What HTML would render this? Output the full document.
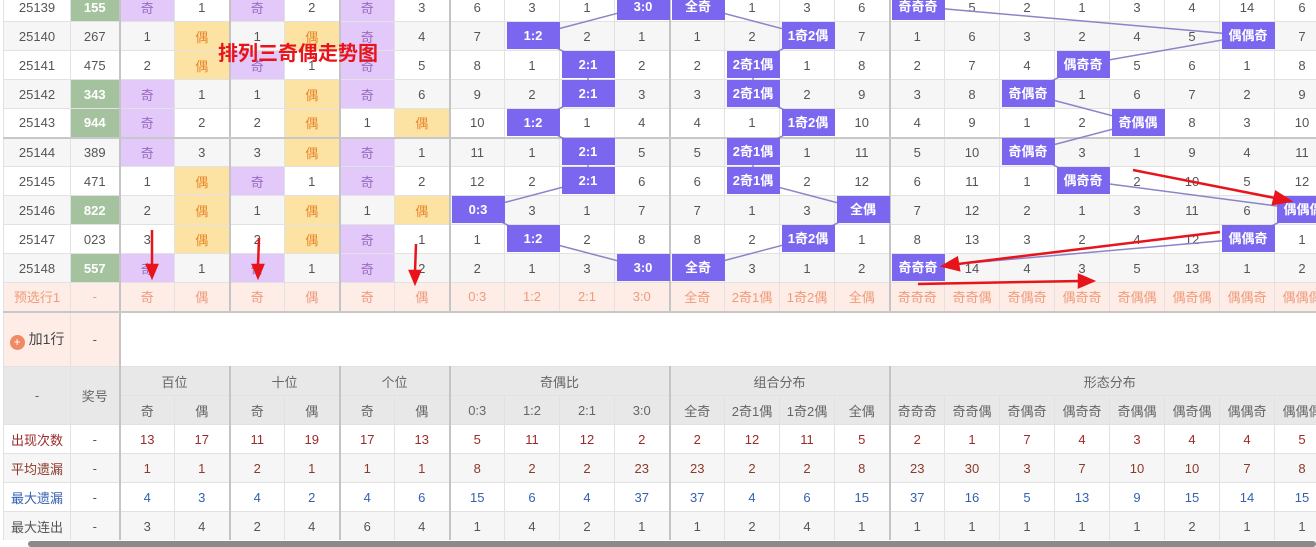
<!DOCTYPE html>
<html><head><meta charset="utf-8"><style>
*{margin:0;padding:0;box-sizing:border-box}
body{width:1316px;height:547px;overflow:hidden;background:#fff;position:relative;font-family:"Liberation Sans","Noto Sans CJK SC",sans-serif;font-size:13px;color:#555}
table{border-collapse:collapse;table-layout:fixed;position:absolute;left:3px;width:1326px}
td{border:1px solid #e2e2e2;text-align:center;height:29px;padding:0;white-space:nowrap;overflow:hidden}
tr.a td{background:#fff}tr.z td{background:#f6f6f6}
td.g{background:#a5c29f!important;color:#fff;font-weight:bold}
td.p{background:#e2c9f9!important;color:#9a6ac0}
td.o{background:#fde3a3!important;color:#e8862a}
.L{border-left:2px solid #c4c4c4}
tr.sep td{border-bottom:2px solid #c8c8c8}
tr.pre td{background:#fdede6;color:#f09a7a}
tr.h td{background:#e8e8e8;color:#666}
.r1 td{color:#9b2a2a}.r2 td{color:#8a3a2a}.r3 td{color:#3461b0}.r4 td{color:#555}
td.k{color:#555!important}
</style></head><body>
<table style="top:-8px">
<colgroup><col style="width:67px"><col style="width:49px"><col span="22" style="width:55px"></colgroup>
<tr class="a"><td>25139</td><td class="g">155</td><td class="p L">奇</td><td>1</td><td class="p L">奇</td><td>2</td><td class="p L">奇</td><td>3</td><td class="L">6</td><td>3</td><td>1</td><td></td><td class="L"></td><td>1</td><td>3</td><td>6</td><td class="L"></td><td>5</td><td>2</td><td>1</td><td>3</td><td>4</td><td>14</td><td>6</td></tr>
<tr class="z"><td>25140</td><td>267</td><td class="L">1</td><td class="o">偶</td><td class="L">1</td><td class="o">偶</td><td class="p L">奇</td><td>4</td><td class="L">7</td><td></td><td>2</td><td>1</td><td class="L">1</td><td>2</td><td></td><td>7</td><td class="L">1</td><td>6</td><td>3</td><td>2</td><td>4</td><td>5</td><td></td><td>7</td></tr>
<tr class="a"><td>25141</td><td>475</td><td class="L">2</td><td class="o">偶</td><td class="p L">奇</td><td>1</td><td class="p L">奇</td><td>5</td><td class="L">8</td><td>1</td><td></td><td>2</td><td class="L">2</td><td></td><td>1</td><td>8</td><td class="L">2</td><td>7</td><td>4</td><td></td><td>5</td><td>6</td><td>1</td><td>8</td></tr>
<tr class="z"><td>25142</td><td class="g">343</td><td class="p L">奇</td><td>1</td><td class="L">1</td><td class="o">偶</td><td class="p L">奇</td><td>6</td><td class="L">9</td><td>2</td><td></td><td>3</td><td class="L">3</td><td></td><td>2</td><td>9</td><td class="L">3</td><td>8</td><td></td><td>1</td><td>6</td><td>7</td><td>2</td><td>9</td></tr>
<tr class="a sep"><td>25143</td><td class="g">944</td><td class="p L">奇</td><td>2</td><td class="L">2</td><td class="o">偶</td><td class="L">1</td><td class="o">偶</td><td class="L">10</td><td></td><td>1</td><td>4</td><td class="L">4</td><td>1</td><td></td><td>10</td><td class="L">4</td><td>9</td><td>1</td><td>2</td><td></td><td>8</td><td>3</td><td>10</td></tr>
<tr class="z"><td>25144</td><td>389</td><td class="p L">奇</td><td>3</td><td class="L">3</td><td class="o">偶</td><td class="p L">奇</td><td>1</td><td class="L">11</td><td>1</td><td></td><td>5</td><td class="L">5</td><td></td><td>1</td><td>11</td><td class="L">5</td><td>10</td><td></td><td>3</td><td>1</td><td>9</td><td>4</td><td>11</td></tr>
<tr class="a"><td>25145</td><td>471</td><td class="L">1</td><td class="o">偶</td><td class="p L">奇</td><td>1</td><td class="p L">奇</td><td>2</td><td class="L">12</td><td>2</td><td></td><td>6</td><td class="L">6</td><td></td><td>2</td><td>12</td><td class="L">6</td><td>11</td><td>1</td><td></td><td>2</td><td>10</td><td>5</td><td>12</td></tr>
<tr class="z"><td>25146</td><td class="g">822</td><td class="L">2</td><td class="o">偶</td><td class="L">1</td><td class="o">偶</td><td class="L">1</td><td class="o">偶</td><td class="L"></td><td>3</td><td>1</td><td>7</td><td class="L">7</td><td>1</td><td>3</td><td></td><td class="L">7</td><td>12</td><td>2</td><td>1</td><td>3</td><td>11</td><td>6</td><td></td></tr>
<tr class="a"><td>25147</td><td>023</td><td class="L">3</td><td class="o">偶</td><td class="L">2</td><td class="o">偶</td><td class="p L">奇</td><td>1</td><td class="L">1</td><td></td><td>2</td><td>8</td><td class="L">8</td><td>2</td><td></td><td>1</td><td class="L">8</td><td>13</td><td>3</td><td>2</td><td>4</td><td>12</td><td></td><td>1</td></tr>
<tr class="z"><td>25148</td><td class="g">557</td><td class="p L">奇</td><td>1</td><td class="p L">奇</td><td>1</td><td class="p L">奇</td><td>2</td><td class="L">2</td><td>1</td><td>3</td><td></td><td class="L"></td><td>3</td><td>1</td><td>2</td><td class="L"></td><td>14</td><td>4</td><td>3</td><td>5</td><td>13</td><td>1</td><td>2</td></tr>
<tr class="pre sep"><td>预选行1</td><td>-</td><td class="L">奇</td><td>偶</td><td class="L">奇</td><td>偶</td><td class="L">奇</td><td>偶</td><td class="L">0:3</td><td>1:2</td><td>2:1</td><td>3:0</td><td class="L">全奇</td><td>2奇1偶</td><td>1奇2偶</td><td>全偶</td><td class="L">奇奇奇</td><td>奇奇偶</td><td>奇偶奇</td><td>偶奇奇</td><td>奇偶偶</td><td>偶奇偶</td><td>偶偶奇</td><td>偶偶偶</td></tr>
<tr><td style="height:55px;background:#fdede6;color:#444;font-size:14px"><span style="display:inline-block;width:15px;height:15px;border-radius:50%;background:#f08a64;color:#fff;font-size:12px;line-height:15px;vertical-align:-2px;margin-right:4px">+</span>加1行</td><td style="background:#fdede6">-</td><td colspan="22" class="L" style="background:#fff"></td></tr>
<tr class="h"><td rowspan="2" style="height:58px">-</td><td rowspan="2">奖号</td><td colspan="2" class="L">百位</td><td colspan="2" class="L">十位</td><td colspan="2" class="L">个位</td><td colspan="4" class="L">奇偶比</td><td colspan="4" class="L">组合分布</td><td colspan="8" class="L">形态分布</td></tr>
<tr class="h"><td class="L">奇</td><td>偶</td><td class="L">奇</td><td>偶</td><td class="L">奇</td><td>偶</td><td class="L">0:3</td><td>1:2</td><td>2:1</td><td>3:0</td><td class="L">全奇</td><td>2奇1偶</td><td>1奇2偶</td><td>全偶</td><td class="L">奇奇奇</td><td>奇奇偶</td><td>奇偶奇</td><td>偶奇奇</td><td>奇偶偶</td><td>偶奇偶</td><td>偶偶奇</td><td>偶偶偶</td></tr>
<tr class="a r1"><td>出现次数</td><td class="k">-</td><td class="L">13</td><td>17</td><td class="L">11</td><td>19</td><td class="L">17</td><td>13</td><td class="L">5</td><td>11</td><td>12</td><td>2</td><td class="L">2</td><td>12</td><td>11</td><td>5</td><td class="L">2</td><td>1</td><td>7</td><td>4</td><td>3</td><td>4</td><td>4</td><td>5</td></tr>
<tr class="z r2"><td>平均遗漏</td><td class="k">-</td><td class="L">1</td><td>1</td><td class="L">2</td><td>1</td><td class="L">1</td><td>1</td><td class="L">8</td><td>2</td><td>2</td><td>23</td><td class="L">23</td><td>2</td><td>2</td><td>8</td><td class="L">23</td><td>30</td><td>3</td><td>7</td><td>10</td><td>10</td><td>7</td><td>8</td></tr>
<tr class="a r3"><td>最大遗漏</td><td class="k">-</td><td class="L">4</td><td>3</td><td class="L">4</td><td>2</td><td class="L">4</td><td>6</td><td class="L">15</td><td>6</td><td>4</td><td>37</td><td class="L">37</td><td>4</td><td>6</td><td>15</td><td class="L">37</td><td>16</td><td>5</td><td>13</td><td>9</td><td>15</td><td>14</td><td>15</td></tr>
<tr class="z r4"><td>最大连出</td><td class="k">-</td><td class="L">3</td><td>4</td><td class="L">2</td><td>4</td><td class="L">6</td><td>4</td><td class="L">1</td><td>4</td><td>2</td><td>1</td><td class="L">1</td><td>2</td><td>4</td><td>1</td><td class="L">1</td><td>1</td><td>1</td><td>1</td><td>1</td><td>2</td><td>1</td><td>1</td></tr>
</table>
<div style="position:absolute;left:0;top:540px;width:1316px;height:7px;background:#fff"></div>
<div style="position:absolute;left:28px;top:541px;width:1288px;height:6px;background:#8a8a8a;border-radius:3px"></div>
<svg width="1316" height="547" style="position:absolute;left:0;top:0" font-family="Liberation Sans,Noto Sans CJK SC,sans-serif" font-size="13">
<g stroke="#8a84c8" stroke-width="1.5" fill="none">
<polyline points="643,6.5 533,35.5 588,64.5 588,93.5 533,122.5 588,151.5 588,180.5 478,209.5 533,238.5 643,267.5"/>
<polyline points="698,6.5 808,35.5 753,64.5 753,93.5 808,122.5 753,151.5 753,180.5 863,209.5 808,238.5 698,267.5"/>
<polyline points="918,6.5 1248,35.5 1083,64.5 1028,93.5 1138,122.5 1028,151.5 1083,180.5 1303,209.5 1248,238.5 918,267.5"/>
</g>
<g fill="#7b66f0">
<rect x="617" y="-8" width="53" height="28"/><rect x="507" y="22" width="53" height="27"/><rect x="562" y="51" width="53" height="27"/><rect x="562" y="80" width="53" height="27"/><rect x="507" y="109" width="53" height="27"/><rect x="562" y="138" width="53" height="27"/><rect x="562" y="167" width="53" height="27"/><rect x="452" y="196" width="53" height="27"/><rect x="507" y="225" width="53" height="27"/><rect x="617" y="254" width="53" height="27"/>
<rect x="672" y="-8" width="53" height="28"/><rect x="782" y="22" width="53" height="27"/><rect x="727" y="51" width="53" height="27"/><rect x="727" y="80" width="53" height="27"/><rect x="782" y="109" width="53" height="27"/><rect x="727" y="138" width="53" height="27"/><rect x="727" y="167" width="53" height="27"/><rect x="837" y="196" width="53" height="27"/><rect x="782" y="225" width="53" height="27"/><rect x="672" y="254" width="53" height="27"/>
<rect x="892" y="-8" width="53" height="28"/><rect x="1222" y="22" width="53" height="27"/><rect x="1057" y="51" width="53" height="27"/><rect x="1002" y="80" width="53" height="27"/><rect x="1112" y="109" width="53" height="27"/><rect x="1002" y="138" width="53" height="27"/><rect x="1057" y="167" width="53" height="27"/><rect x="1277" y="196" width="53" height="27"/><rect x="1222" y="225" width="53" height="27"/><rect x="892" y="254" width="53" height="27"/>
</g>
<g fill="#fff" font-weight="bold" text-anchor="middle">
<text x="643" y="11">3:0</text><text x="533" y="40">1:2</text><text x="588" y="69">2:1</text><text x="588" y="98">2:1</text><text x="533" y="127">1:2</text><text x="588" y="156">2:1</text><text x="588" y="185">2:1</text><text x="478" y="214">0:3</text><text x="533" y="243">1:2</text><text x="643" y="272">3:0</text>
<text x="698" y="11">全奇</text><text x="808" y="40">1奇2偶</text><text x="753" y="69">2奇1偶</text><text x="753" y="98">2奇1偶</text><text x="808" y="127">1奇2偶</text><text x="753" y="156">2奇1偶</text><text x="753" y="185">2奇1偶</text><text x="863" y="214">全偶</text><text x="808" y="243">1奇2偶</text><text x="698" y="272">全奇</text>
<text x="918" y="11">奇奇奇</text><text x="1248" y="40">偶偶奇</text><text x="1083" y="69">偶奇奇</text><text x="1028" y="98">奇偶奇</text><text x="1138" y="127">奇偶偶</text><text x="1028" y="156">奇偶奇</text><text x="1083" y="185">偶奇奇</text><text x="1303" y="214">偶偶偶</text><text x="1248" y="243">偶偶奇</text><text x="918" y="272">奇奇奇</text>
</g>
<text x="218" y="60" fill="#e8141c" font-size="20" font-weight="bold">排列三奇偶走势图</text>
<g stroke="#e8141c" stroke-width="2.5" fill="#e8141c">
<line x1="152" y1="230" x2="152" y2="266"/><polygon points="147,265 157,265 152,277"/>
<line x1="259" y1="238" x2="258" y2="266"/><polygon points="253,265 263,265 258,277"/>
<line x1="416" y1="244" x2="415" y2="272"/><polygon points="410,271 420,271 415,283"/>
<line x1="1133" y1="170" x2="1275" y2="198"/><polygon points="1276,192 1290,201 1273,204"/>
<line x1="1220" y1="232" x2="958" y2="264"/><polygon points="957,258 943,266 959,270"/>
<line x1="918" y1="284" x2="1080" y2="281"/><polygon points="1079,275 1093,281 1079,287"/>
</g>
</svg>
</body></html>
